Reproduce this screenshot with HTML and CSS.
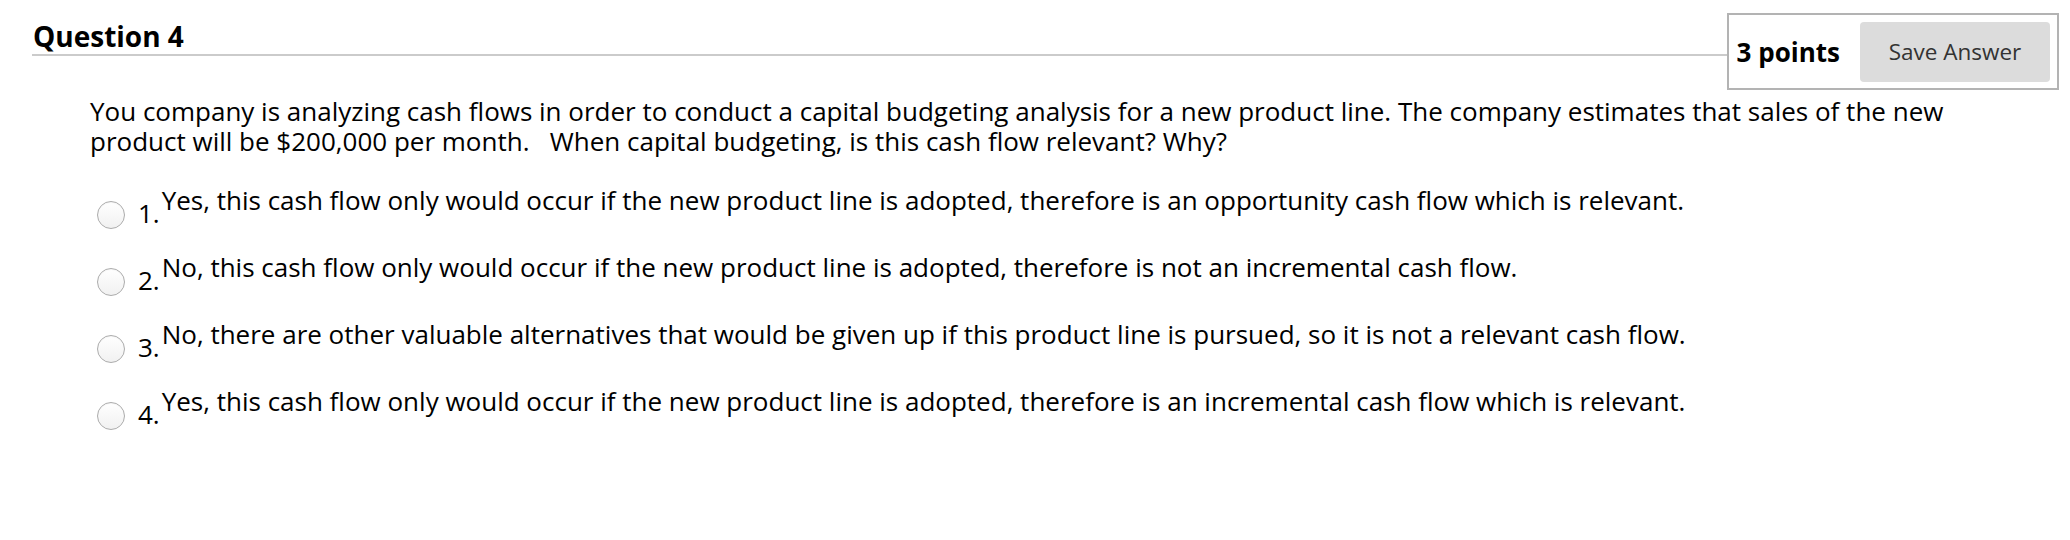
FILE: index.html
```html
<!DOCTYPE html>
<html>
<head>
<meta charset="utf-8">
<link rel="stylesheet" href="styles.css">
</head>
<body>
<div class="page">
  <div class="header">
    <h2 class="title">Question 4</h2>
    <div class="points-box">
      <span class="points">3 points</span>
      <button class="save">Save Answer</button>
    </div>
  </div>
  <div class="question">
    <p class="stem">You company is analyzing cash flows in order to conduct a capital budgeting analysis for a new product line. The company estimates that sales of the new product will be $200,000 per month. &nbsp; When capital budgeting, is this cash flow relevant? Why?</p>
    <ul class="options">
      <li class="option"><span class="radio"></span><span class="num">1.</span><span class="text">Yes, this cash flow only would occur if the new product line is adopted, therefore is an opportunity cash flow which is relevant.</span></li>
      <li class="option"><span class="radio"></span><span class="num">2.</span><span class="text">No, this cash flow only would occur if the new product line is adopted, therefore is not an incremental cash flow.</span></li>
      <li class="option"><span class="radio"></span><span class="num">3.</span><span class="text">No, there are other valuable alternatives that would be given up if this product line is pursued, so it is not a relevant cash flow.</span></li>
      <li class="option"><span class="radio"></span><span class="num">4.</span><span class="text">Yes, this cash flow only would occur if the new product line is adopted, therefore is an incremental cash flow which is relevant.</span></li>
    </ul>
  </div>
</div>
</body>
</html>
```

FILE: styles.css
```css
* { box-sizing: border-box; }
html, body { margin: 0; padding: 0; background: #fff; }
body {
  font-family: "Open Sans", "Liberation Sans", sans-serif;
  color: #000;
}
.page { width: 2070px; }
.header {
  display: flex;
  align-items: flex-start;
  padding: 13px 11px 0 32px;
}
.title {
  flex: 1;
  margin: 5px 0 0 0;
  padding-left: 1px;
  font-size: 28px;
  font-weight: 700;
  line-height: 36px;
  border-bottom: 2px solid #cbcbcb;
}
.points-box {
  display: flex;
  align-items: center;
  gap: 20px;
  height: 77px;
  padding: 0 7px 0 8px;
  border: 2px solid #b3b3b3;
}
.points {
  font-size: 26px;
  font-weight: 700;
}
.save {
  width: 190px;
  height: 60px;
  border: none;
  border-radius: 4px;
  background: #dcdcdc;
  color: #333;
  font-family: "Open Sans", "Liberation Sans", sans-serif;
  font-size: 22.5px;
  padding: 0;
}
.question { padding-left: 90px; }
.stem {
  margin: 6px 0 0 0;
  width: 1920px;
  font-size: 26px;
  line-height: 30px;
}
.options {
  list-style: none;
  margin: 29px 0 0 0;
  padding: 0;
}
.option {
  display: flex;
  align-items: flex-start;
  font-size: 26px;
  line-height: 30px;
  margin-bottom: 23px;
}
.radio {
  width: 28px;
  height: 28px;
  margin: 16px 13px 0 7px;
  border-radius: 50%;
  border: 1px solid #acacac;
  background: linear-gradient(#ffffff, #f1f1f1);
  box-shadow: inset 0 1px 1px rgba(0,0,0,0.04);
  flex: none;
}
.num {
  padding-top: 13px;
  margin-right: 2px;
}
```
